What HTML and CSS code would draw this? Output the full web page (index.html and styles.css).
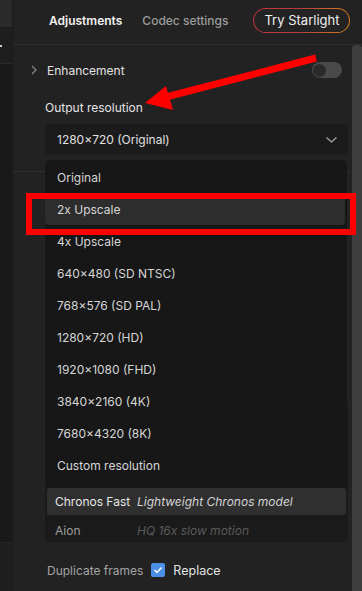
FILE: index.html
```html
<!DOCTYPE html>
<html>
<head>
<meta charset="utf-8">
<link rel="stylesheet" href="styles.css">
</head>
<body>
<div class="app">
  <aside class="rail">
    <div class="rail-top"></div>
    <div class="rail-mid"><span class="rail-dot"></span></div>
    <div class="rail-low"></div>
    <div class="rail-bottom"></div>
  </aside>
  <main class="panel">
    <header class="tabs">
      <span class="tab active">Adjustments</span>
      <span class="tab">Codec settings</span>
      <span class="try">Try Starlight</span>
    </header>
    <div class="body">
      <div class="content">
        <div class="sec-row">
          <svg class="chev-right" width="6" height="10" viewBox="0 0 6 10"><path d="M1 1 L5 5 L1 9" fill="none" stroke="#8a8a8a" stroke-width="1.2"/></svg>
          <span class="sec-title">Enhancement</span>
          <span class="toggle"><span class="knob"></span></span>
        </div>
        <div class="field-label">Output resolution</div>
        <div class="select">
          <span>1280×720 (Original)</span>
          <svg width="11" height="6" viewBox="0 0 11 6"><path d="M0.5 0.5 L5.5 5 L10.5 0.5" fill="none" stroke="#a8a8a8" stroke-width="1.2"/></svg>
        </div>
        <div class="separator"></div>
        <div class="hidden-section"><span class="sec-mark"></span></div>
        <div class="models">
          <div class="model"></div>
          <div class="model"></div>
          <div class="model"></div>
          <div class="model selected"><span class="m-name">Chronos Fast</span><span class="m-desc">Lightweight Chronos model</span></div>
          <div class="model dim"><span class="m-name">Aion</span><span class="m-desc">HQ 16x slow motion</span></div>
        </div>
        <div class="dup">
          <span class="dup-label">Duplicate frames</span>
          <span class="check"><svg width="10" height="8" viewBox="0 0 10 8"><path d="M1.5 4 L4 6.5 L8.5 1.5" fill="none" stroke="#fff" stroke-width="1.5"/></svg></span>
          <span class="dup-value">Replace</span>
        </div>

        <ul class="menu">
          <li class="item">Original</li>
          <li class="item hover">2x Upscale</li>
          <li class="item">4x Upscale</li>
          <li class="item">640×480 (SD NTSC)</li>
          <li class="item">768×576 (SD PAL)</li>
          <li class="item">1280×720 (HD)</li>
          <li class="item">1920×1080 (FHD)</li>
          <li class="item">3840×2160 (4K)</li>
          <li class="item">7680×4320 (8K)</li>
          <li class="item">Custom resolution</li>
        </ul>
      </div>
      <div class="scrollbar"><div class="thumb"></div></div>
    </div>
  </main>
  <div class="annot-box"></div>
  <svg class="annot-arrow" width="362" height="591" viewBox="0 0 362 591">
    <line x1="316" y1="58" x2="162" y2="98" stroke="#ff0000" stroke-width="7"/>
    <polygon points="145,103 166,86 173,110" fill="#ff0000"/>
  </svg>
</div>
</body>
</html>
```
FILE: styles.css
```css
* { box-sizing: border-box; }
html, body { margin: 0; padding: 0; }
body {
  width: 362px;
  height: 591px;
  overflow: hidden;
  background: #222222;
  font-family: Inter, "Noto Sans", sans-serif;
  font-size: 12px;
  color: #dcdcdc;
}
.app {
  position: relative;
  display: flex;
  width: 362px;
  height: 591px;
}
.rail {
  width: 13px;
  flex: none;
  display: flex;
  flex-direction: column;
  border-right: 1px solid #1a1a1a;
}
.rail-top { height: 28px; background: #2b2b2b; border-bottom: 1px solid #1c1c1c; }
.rail-mid { height: 36px; background: #1e1e1e; border-bottom: 1px solid #2a2a2a; position: relative; }
.rail-dot { position: absolute; left: 0; top: 17px; width: 2px; height: 2px; background: #d0d0d0; }
.rail-low { flex: 1; background: #191919; border-bottom: 1px solid #262626; }
.rail-bottom { height: 48px; background: #1f1f1f; }

.panel {
  flex: 1;
  display: flex;
  flex-direction: column;
  min-width: 0;
}
.tabs {
  height: 45px;
  flex: none;
  display: flex;
  align-items: center;
  padding-left: 36px;
  border-bottom: 1px solid #2e2e2e;
  padding-bottom: 4px;
}
.tab {
  font-size: 12px;
  font-weight: 500;
  color: #9c9c9c;
  margin-right: 22px;
}
.tab.active { color: #f2f2f2; font-weight: 600; margin-right: 20px; }
.try {
  margin-left: 3px;
  height: 25px;
  width: 97px;
  border-radius: 13px;
  border: 1px solid transparent;
  background:
    linear-gradient(#232323, #232323) padding-box,
    linear-gradient(90deg, #c8323e, #b0403a 50%, #d8801c) border-box;
  color: #f0f0f0;
  font-size: 13px;
  display: flex;
  align-items: center;
  justify-content: center;
}
.body {
  flex: 1;
  display: flex;
  min-height: 0;
}
.content {
  position: relative;
  flex: 1;
  padding-top: 11px;
}
.scrollbar {
  width: 11px;
  flex: none;
  padding-left: 1px;
}
.thumb {
  height: 100%;
  background: #3e3e3e;
  border-radius: 4px 4px 0 0;
}
.sec-row {
  height: 28px;
  display: flex;
  align-items: center;
  padding-left: 18px;
  padding-right: 9px;
}
.chev-right { margin-right: 10px; }
.sec-title { color: #e2e2e2; font-size: 12px; flex: 1; }
.toggle {
  width: 30px;
  height: 16px;
  border-radius: 8px;
  background: #4a4a4a;
  position: relative;
}
.knob {
  position: absolute;
  left: 1px;
  top: 1.5px;
  width: 13px;
  height: 13px;
  border-radius: 50%;
  background: #2a2a2a;
}
.field-label {
  margin-top: 16px;
  height: 16px;
  line-height: 16px;
  padding-left: 32px;
  color: #e4e4e4;
  font-size: 12px;
}
.select {
  margin: 8px 3px 0 32px;
  height: 31px;
  background: #1b1b1b;
  border-radius: 4px;
  display: flex;
  align-items: center;
  justify-content: space-between;
  padding: 0 11px 0 12px;
  color: #e0e0e0;
  font-size: 12px;
}
.separator {
  margin-top: 16px;
  height: 1px;
  background: #2f2f2f;
}
.hidden-section {
  height: 230px;
  position: relative;
}
.sec-mark {
  position: absolute;
  left: 20px;
  top: 24px;
  width: 2px;
  height: 1px;
  background: #9a9a9a;
}
.models {
  margin: 0 3px 0 32px;
  background: #1a1a1a;
  border-radius: 5px;
  padding: 2px 2px 0;
}
.model {
  height: 27px;
  margin-bottom: 1px;
  display: flex;
  align-items: center;
  padding-left: 8px;
  border-radius: 3px;
  font-size: 12px;
}
.model.dim { margin-bottom: 0; height: 26px; padding-top: 2px; }
.m-name { width: 82px; flex: none; color: #e6e6e6; }
.m-desc { font-style: italic; color: #d4d4d4; }
.model.selected { background: #2f2f2f; }
.model.dim .m-name { color: #9e9e9e; }
.model.dim .m-desc { color: #5a5a5a; }
.dup {
  margin-top: 18px;
  height: 20px;
  display: flex;
  align-items: center;
  padding-left: 34px;
  font-size: 12px;
}
.dup-label { color: #a4a4a4; }
.check {
  margin-left: 8px;
  width: 14px;
  height: 14px;
  border-radius: 2px;
  background: #4b8fe6;
  display: flex;
  align-items: center;
  justify-content: center;
}
.dup-value { margin-left: 8px; color: #e2e2e2; font-size: 12.5px; }

.menu {
  position: absolute;
  left: 32px;
  top: 115px;
  width: 302px;
  height: 328px;
  margin: 0;
  padding: 2px 2px 0 0;
  list-style: none;
  background: #171717;
  border-radius: 5px;
}
.item {
  height: 31px;
  margin-bottom: 1px;
  line-height: 31px;
  padding-left: 12px;
  color: #d6d6d6;
  font-size: 12px;
  border-radius: 4px;
}
.item.hover { background: #2d2d2d; }

.annot-box {
  position: absolute;
  left: 26px;
  top: 193px;
  width: 330px;
  height: 42px;
  border: 6px solid #ff0000;
}
.annot-arrow {
  position: absolute;
  left: 0;
  top: 0;
  pointer-events: none;
}
```
